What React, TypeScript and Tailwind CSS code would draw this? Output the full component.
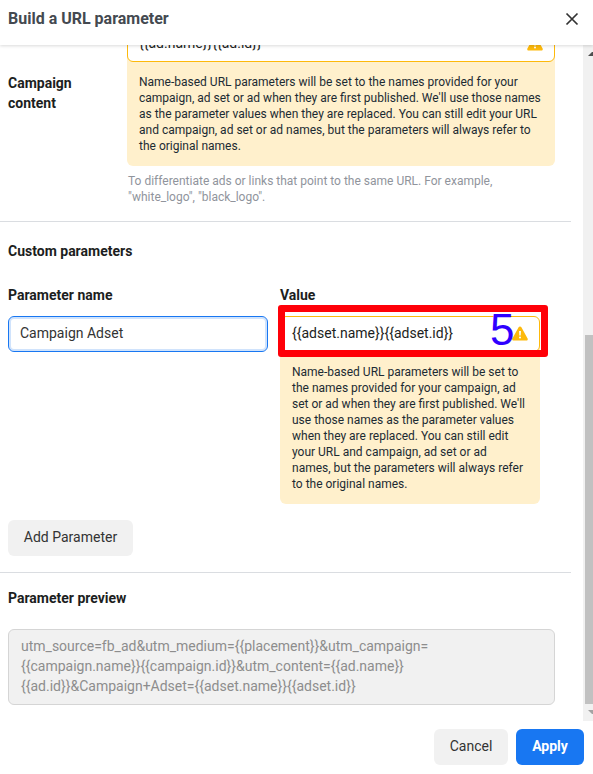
import type { ReactNode } from "react";

function Warning({ className = "" }: { className?: string }) {
  return (
    <svg viewBox="0 0 16 15" className={`h-[15px] w-4 shrink-0 ${className}`}>
      <path d="M8 .4c.6 0 1.1.3 1.4.8l6.2 11.3c.5.9-.1 2-1.200 2H1.600C.5 14.500-.1 13.400.4 12.500L6.600 1.200C6.900.7 7.400.4 8 .4z" fill="#fdb90b" />
      <path d="M7.100 5h1.800l-.2 4.600H7.300z" fill="#fff" />
      <circle cx="8" cy="11.400" r="1" fill="#fff" />
    </svg>
  );
}

function Lines({ lines }: { lines: string[] }) {
  return (
    <>
      {lines.map((line) => (
        <span key={line} className="block whitespace-nowrap">
          {line}
        </span>
      ))}
    </>
  );
}

function Notice({ lines }: { lines: string[] }) {
  return (
    <div className="rounded-b-md bg-[#fff0cc] p-3 text-xs leading-4 text-[#1c2b33]">
      <Lines lines={lines} />
    </div>
  );
}

function WarningField({ children }: { children: ReactNode }) {
  return (
    <div className="bg-[linear-gradient(to_bottom,#fff_50%,#fff0cc_50%)]">
      <div className="flex h-9 items-center justify-between rounded-md border border-[#fdb90b] bg-white px-[11px] pb-0.5 text-sm text-[#1c1e21]">
        {children}
        <Warning />
      </div>
    </div>
  );
}

export default function App() {
  return (
    <div className="flex h-[774px] w-[593px] flex-col overflow-hidden bg-white font-['Roboto',sans-serif] text-sm leading-5 text-[#1c1e21]">
      <header className="relative z-10 flex h-[45px] shrink-0 items-center justify-between bg-white pr-[14px] pb-[7px] pl-2 shadow-[0_1px_3px_rgba(0,0,0,0.15)]">
        <h1 className="text-base font-bold text-[#444950]">Build a URL parameter</h1>
        <svg viewBox="0 0 14 14" className="h-[14px] w-[14px]" fill="none" stroke="#333" strokeWidth="1.7">
          <path d="M1.500 1.500l11 11M12.500 1.500l-11 11" />
        </svg>
      </header>

      <div className="flex h-[676px] shrink-0 overflow-hidden">
        <main className="w-[583px] shrink-0 pr-3">
          <section className="-mt-[19px] flex h-[196px] border-b border-[#dadde1] pl-2">
            <h2 className="w-[119px] shrink-0 pt-[47px] font-bold">
              Campaign
              <br />
              content
            </h2>
            <div className="w-[428px]">
              <WarningField>{"{{ad.name}}{{ad.id}}"}</WarningField>
              <Notice
                lines={[
                  "Name-based URL parameters will be set to the names provided for your",
                  "campaign, ad set or ad when they are first published. We'll use those names",
                  "as the parameter values when they are replaced. You can still edit your URL",
                  "and campaign, ad set or ad names, but the parameters will always refer to",
                  "the original names.",
                ]}
              />
              <p className="pt-[7px] pl-px text-xs leading-4 text-[#90949c]">
                <Lines
                  lines={[
                    "To differentiate ads or links that point to the same URL. For example,",
                    '"white_logo", "black_logo".',
                  ]}
                />
              </p>
            </div>
          </section>

          <section className="h-[351px] border-b border-[#dadde1] pt-[19px] pl-2">
            <h2 className="font-bold">Custom parameters</h2>
            <div className="flex gap-3 pt-6">
              <div className="w-[260px]">
                <h3 className="pb-[11px] font-bold">Parameter name</h3>
                <div className="flex h-9 items-center rounded-md border border-[#1877f2] bg-white px-[11px] pb-0.5 text-[#333] shadow-[inset_0_0_0_2px_#d0e3fc]">
                  Campaign Adset
                </div>
              </div>
              <div className="w-[260px]">
                <h3 className="pb-[11px] font-bold">Value</h3>
                <div className="relative">
                  <WarningField>{"{{adset.name}}{{adset.id}}"}</WarningField>
                  <div className="absolute -top-[11px] -left-[2px] h-[52px] w-[270px] rounded-[3px] border-[7px] border-[#ff0008]" />
                  <span className="absolute top-[-8px] left-[210px] font-['Liberation_Sans',sans-serif] text-[44px] leading-[44px] text-[#2f00ff]">
                    5
                  </span>
                </div>
                <Notice
                  lines={[
                    "Name-based URL parameters will be set to",
                    "the names provided for your campaign, ad",
                    "set or ad when they are first published. We'll",
                    "use those names as the parameter values",
                    "when they are replaced. You can still edit",
                    "your URL and campaign, ad set or ad",
                    "names, but the parameters will always refer",
                    "to the original names.",
                  ]}
                />
              </div>
            </div>
            <button className="mt-4 block h-9 w-[125px] rounded-md bg-[#f1f1f1] pb-0.5 text-[#333]">Add Parameter</button>
          </section>

          <section className="pt-[15px] pl-2">
            <h2 className="font-bold">Parameter preview</h2>
            <div className="mt-[21px] h-[76px] w-[547px] rounded-md border border-[#d5d5d5] bg-[#f1f1f1] px-3 py-1.5 text-[#8d8d8d]">
              <Lines
                lines={[
                  "utm_source=fb_ad&utm_medium={{placement}}&utm_campaign=",
                  "{{campaign.name}}{{campaign.id}}&utm_content={{ad.name}}",
                  "{{ad.id}}&Campaign+Adset={{adset.name}}{{adset.id}}",
                ]}
              />
            </div>
          </section>
        </main>

        <div className="flex w-[10px] flex-col items-end overflow-hidden bg-[#f1f1f1]">
          <svg viewBox="0 0 5 290" className="h-[290px] w-[5px] shrink-0">
            <path d="M0 11L4 7h1v4z" fill="#505050" />
          </svg>
          <div className="h-[369px] w-2 shrink-0 bg-[#c1c1c1]" />
          <svg viewBox="0 0 5 17" className="h-[17px] w-[5px] shrink-0">
            <path d="M0 6h5v4H4z" fill="#a3a3a3" />
          </svg>
        </div>
      </div>

      <footer className="flex justify-end gap-2 pt-2 pr-[9px]">
        <button className="h-9 w-[74px] rounded-md bg-[#f1f1f1] pb-0.5 text-[#333]">Cancel</button>
        <button className="h-9 w-[68px] rounded-md bg-[#1877f2] pb-0.5 font-bold text-white">Apply</button>
      </footer>
    </div>
  );
}
